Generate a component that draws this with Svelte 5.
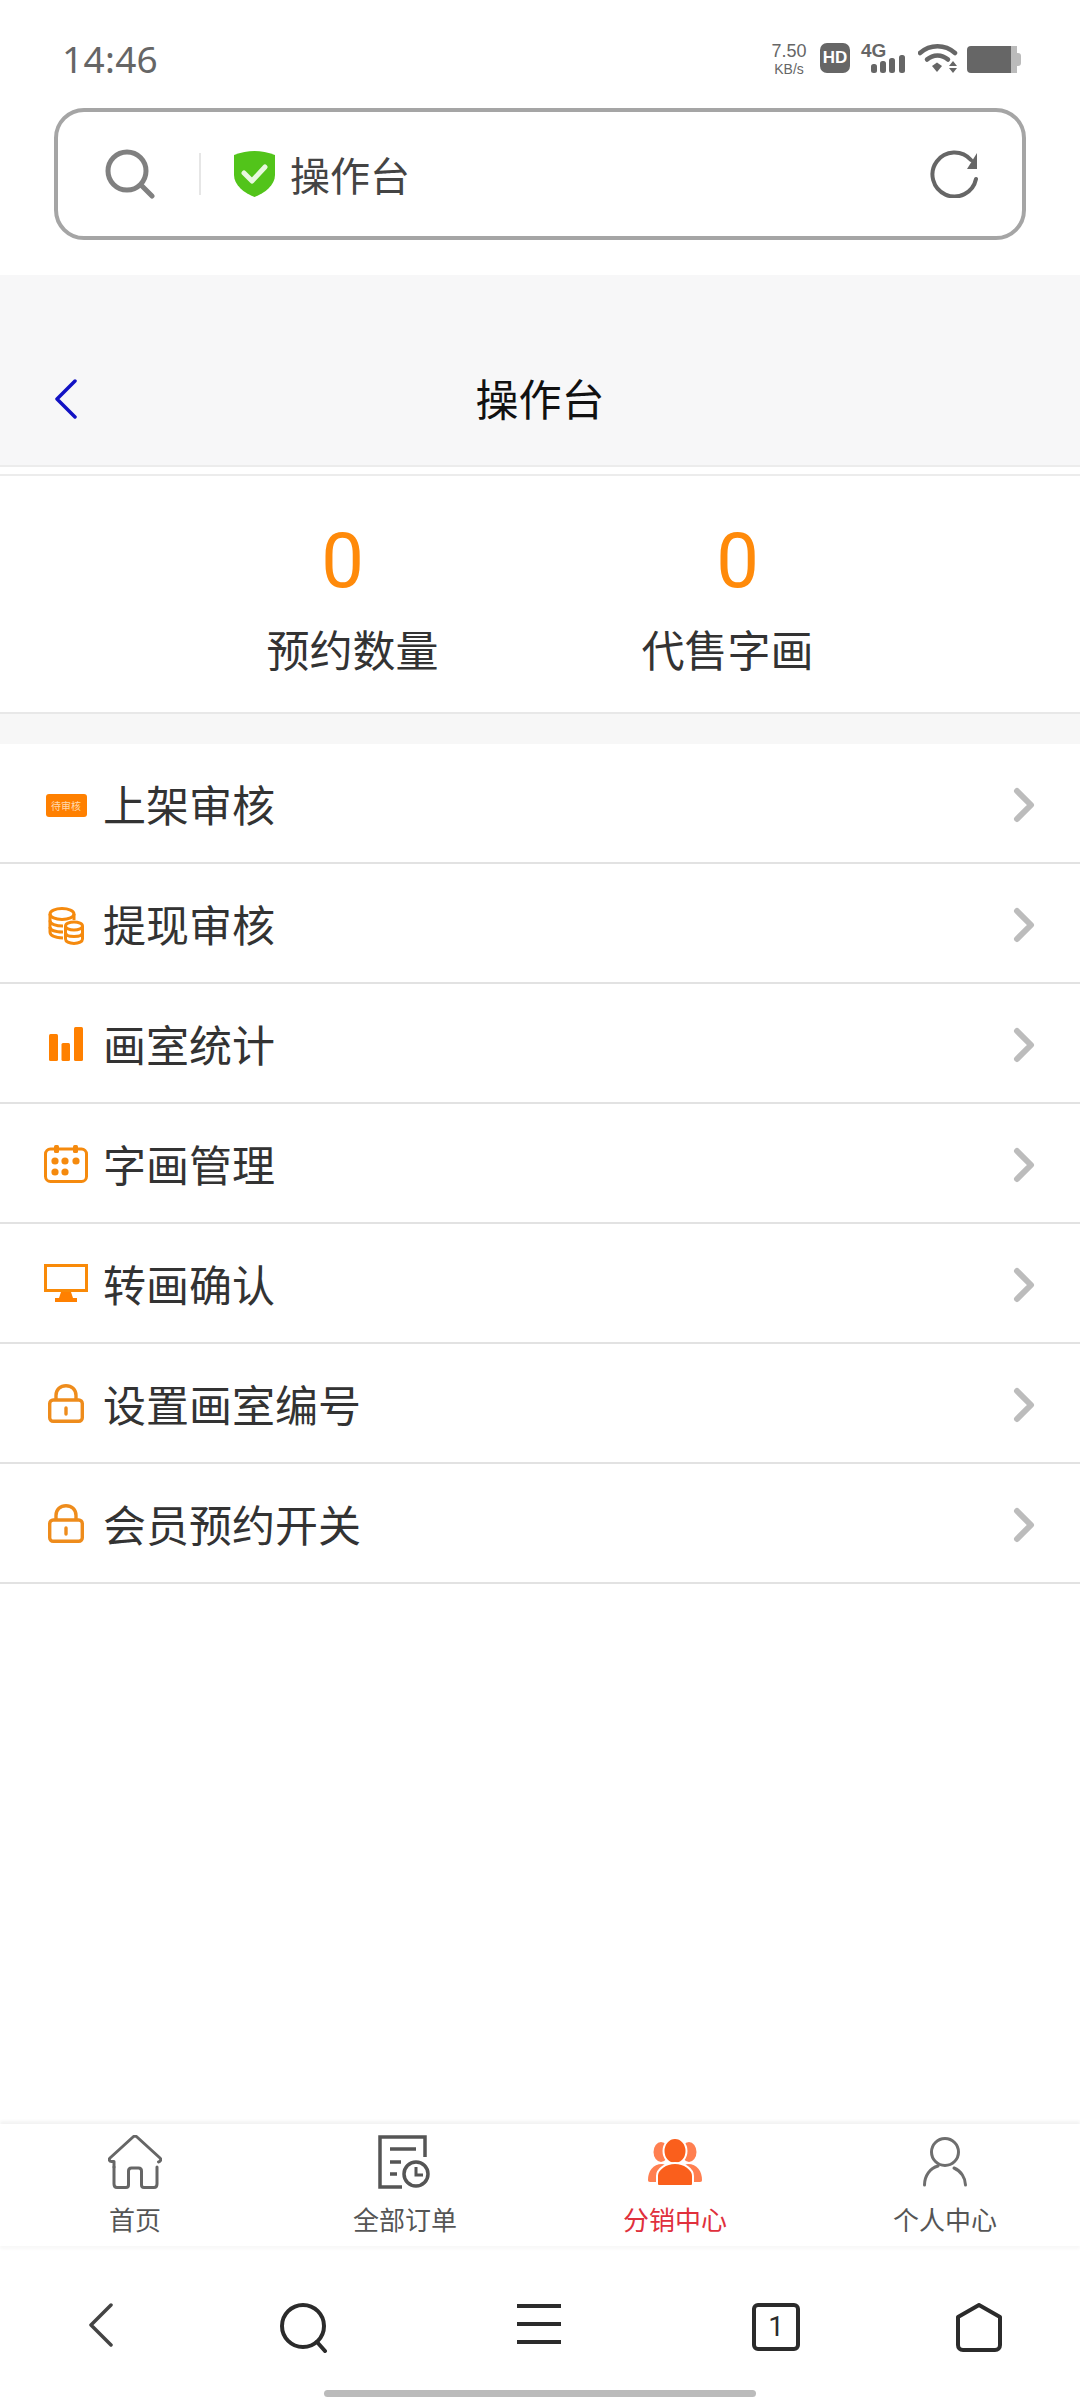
<script>
	const stats = [
		{ value: 0, label: '预约数量', side: 'left' },
		{ value: 0, label: '代售字画', side: 'right' }
	];

	const rows = [
		{ icon: 'badge', label: '上架审核' },
		{ icon: 'coins', label: '提现审核' },
		{ icon: 'bars', label: '画室统计' },
		{ icon: 'calendar', label: '字画管理' },
		{ icon: 'monitor', label: '转画确认' },
		{ icon: 'lock', label: '设置画室编号' },
		{ icon: 'lock', label: '会员预约开关' }
	];

	const tabs = [
		{ icon: 'home', label: '首页' },
		{ icon: 'orders', label: '全部订单' },
		{ icon: 'group', label: '分销中心', active: true },
		{ icon: 'person', label: '个人中心' }
	];
</script>

<div class="page">
	<!-- STATUS BAR -->
	<div class="status">
		<span class="time">14:46</span>
		<div class="status-icons">
			<div class="speed"><span>7.50</span><span class="unit">KB/s</span></div>
			<span class="hd">HD</span>
			<div class="signal">
				<span class="four-g">4G</span>
				<svg width="45" height="18" viewBox="0 0 45 18">
					<rect x="10" y="9" width="6" height="9" rx="2.5" fill="#666" />
					<rect x="19" y="6" width="6" height="12" rx="2.5" fill="#666" />
					<rect x="28" y="3" width="6" height="15" rx="2.5" fill="#666" />
					<rect x="38" y="0" width="6" height="18" rx="2.5" fill="#666" />
				</svg>
			</div>
			<svg class="wifi" width="40" height="30" viewBox="0 0 40 30">
				<path d="M2 10C12 1 27 1 37 10" fill="none" stroke="#666" stroke-width="4.5" stroke-linecap="round" />
				<path d="M9 16.500C15 11 24 11 30 16.500" fill="none" stroke="#666" stroke-width="4.500" stroke-linecap="round" />
				<path d="M14 23L19 19.500L24 23L19 29Z" fill="#666" />
				<path d="M31 23L35 18L39 23ZM31 25H39L35 30Z" fill="#666" />
			</svg>
			<div class="battery"><div class="battery-fill"></div><div class="battery-cap"></div></div>
		</div>
	</div>

	<!-- ADDRESS BAR -->
	<div class="address-wrap">
		<div class="address">
			<svg class="addr-search" width="50" height="50" viewBox="0 0 50 50">
				<circle cx="22" cy="22" r="19" fill="none" stroke="#808080" stroke-width="5" />
				<path d="M36 36L47 47" stroke="#808080" stroke-width="5" stroke-linecap="round" />
			</svg>
			<div class="addr-divider"></div>
			<svg class="shield" width="41" height="46" viewBox="0 0 41 46">
				<path d="M20.500 0C27 0 34 1.500 41 4V24C41 34 31 42 20.500 46C10 42 0 34 0 24V4C7 1.500 14 0 20.500 0Z" fill="#52c41a" />
				<path d="M10 22L18 30L31 16" fill="none" stroke="#e8f8df" stroke-width="5" stroke-linecap="round" stroke-linejoin="round" />
			</svg>
			<span class="addr-text">操作台</span>
			<svg class="refresh" width="48" height="48" viewBox="0 0 48 48">
				<path d="M46 29A22 22 0 1 1 41 10" fill="none" stroke="#666" stroke-width="4" stroke-linecap="round" />
				<path d="M47 3V19H37Z" fill="#666" />
			</svg>
		</div>
	</div>

	<!-- PAGE HEADER -->
	<header class="header">
		<svg class="back" width="24" height="40" viewBox="0 0 24 40">
			<path d="M21 2L3 20L21 38" fill="none" stroke="#1212c4" stroke-width="3.500" stroke-linecap="round" stroke-linejoin="round" />
		</svg>
		<h1>操作台</h1>
	</header>

	<section class="stats">
		{#each stats as stat}
			<div class="stat">
				<span class="value {stat.side}">{stat.value}</span>
				<span class="stat-label">{stat.label}</span>
			</div>
		{/each}
	</section>
	<div class="band"></div>

	<ul class="list">
		{#each rows as row}
			<li class="row">
				<span class="row-icon ic-{row.icon}">
					{#if row.icon === 'badge'}
						<span class="badge">待审核</span>
					{:else if row.icon === 'coins'}
						<svg width="36" height="38" viewBox="0 0 36 38" fill="none" stroke="#f58a0e" stroke-width="3">
							<ellipse cx="14" cy="7" rx="12" ry="5.500" />
							<path d="M2 7V25C2 28 6 30.500 15 31" />
							<path d="M2 13.500C2 17 8 19 15 19" />
							<path d="M2 20C2 23 7 25 15 25" />
							<path d="M26 7V13" />
							<ellipse cx="26" cy="19" rx="8.500" ry="4" />
							<path d="M17.500 19V32C17.500 34.500 21 36.500 26 36.500C31 36.500 34.500 34.500 34.500 32V19" />
							<path d="M17.500 25.500C17.500 28 21 29.500 26 29.500C31 29.500 34.500 28 34.500 25.500" />
						</svg>
					{:else if row.icon === 'bars'}
						<svg width="34" height="34" viewBox="0 0 34 34" fill="#ff8000">
							<rect x="0" y="7" width="9" height="27" rx="1.500" />
							<rect x="12.500" y="16" width="8.500" height="18" rx="1.500" />
							<rect x="25" y="0" width="9" height="34" rx="1.500" />
						</svg>
					{:else if row.icon === 'calendar'}
						<svg width="44" height="38" viewBox="0 0 44 38">
							<rect x="1.500" y="4" width="41" height="32.500" rx="5" fill="none" stroke="#f58a0e" stroke-width="3" />
							<g fill="#f58a0e">
								<rect x="10" y="0" width="5" height="8" rx="1.500" />
								<rect x="29" y="0" width="5" height="8" rx="1.500" />
								<circle cx="11" cy="16" r="3.600" />
								<circle cx="21" cy="16" r="3.600" />
								<circle cx="32" cy="16" r="3.600" />
								<circle cx="11" cy="27" r="3.600" />
								<circle cx="21" cy="27" r="3.600" />
							</g>
						</svg>
					{:else if row.icon === 'monitor'}
						<svg width="44" height="38" viewBox="0 0 44 38">
							<rect x="1.500" y="1.500" width="41" height="25" fill="none" stroke="#f98a08" stroke-width="3" />
							<path d="M17 28H27L29 34H33V38H11V34H15Z" fill="#ff8000" />
						</svg>
					{:else}
						<svg width="36" height="39" viewBox="0 0 36 39" fill="none" stroke="#ee8c1c" stroke-width="3.400">
							<rect x="1.700" y="16" width="32.600" height="21.300" rx="3.500" />
							<path d="M8 16V11.500C8 5.500 12.500 1.700 18 1.700C23.500 1.700 28 5.500 28 11.500V16" />
							<path d="M18 24V30" stroke-linecap="round" />
						</svg>
					{/if}
				</span>
				<span class="row-label">{row.label}</span>
				<svg class="chevron" width="24" height="36" viewBox="0 0 24 36">
					<path d="M5 4L19 18L5 32" fill="none" stroke="#bcbcbc" stroke-width="6" stroke-linejoin="round" stroke-linecap="round" />
				</svg>
			</li>
		{/each}
	</ul>

	<!-- TAB BAR -->
	<nav class="tabs">
		{#each tabs as tab}
			<div class="tab" class:active={tab.active}>
				<span class="tab-icon">
					{#if tab.icon === 'home'}
						<svg width="54" height="54" viewBox="0 0 54 54" fill="none" stroke="#666" stroke-width="3" stroke-linecap="round" stroke-linejoin="round">
							<path d="M6 32V26.500H3.500C1.500 26.500 0.500 24.500 2 23L25 2C26 1 28 1 29 2L52 23C53.500 24.500 52.500 26.500 50.500 27" />
							<path d="M49 32V49C49 51 48 52.500 46 52.500H36C34.500 52.500 33.500 51.500 33.500 50V36C33.500 34 32.500 33 30.500 33H23.500C21.500 33 20.500 34 20.500 36V50C20.500 51.500 19.500 52.500 18 52.500H9C7 52.500 6 51 6 49V32" />
						</svg>
					{:else if tab.icon === 'orders'}
						<svg width="54" height="54" viewBox="0 0 54 54" fill="none" stroke="#555" stroke-width="3.500">
							<path d="M24 52H2V2H47V22" />
							<path d="M12 14H38M12 27H23M12 39H19" />
							<circle cx="38" cy="39" r="12" />
							<path d="M38 32V40H45" stroke-width="3" />
						</svg>
					{:else if tab.icon === 'group'}
						<svg width="54" height="48" viewBox="0 0 54 48">
							<ellipse cx="13" cy="14" rx="7.500" ry="10" fill="#ff7f50" />
							<ellipse cx="41" cy="14" rx="7.500" ry="10" fill="#ff7f50" />
							<path d="M0 42C0 33 5 26 14 26C18 26 20 30 20 34V44H2C0.500 44 0 43 0 42Z" fill="#ff7f50" />
							<path d="M54 42C54 33 49 26 40 26C36 26 34 30 34 34V44H52C53.500 44 54 43 54 42Z" fill="#ff7f50" />
							<ellipse cx="27" cy="13" rx="11.500" ry="13" fill="#fa5f1c" stroke="#fff" stroke-width="2" />
							<path d="M9 46V38C9 31 18 25 27 25C36 25 45 31 45 38V46C45 47 44 48 43 48H11C10 48 9 47 9 46Z" fill="#fa5f1c" stroke="#fff" stroke-width="2" />
						</svg>
					{:else}
						<svg width="44" height="50" viewBox="0 0 44 50" fill="none" stroke="#6e6e6e" stroke-width="3" stroke-linecap="round">
							<circle cx="22" cy="15" r="13.500" />
							<path d="M1.500 48C1.500 39 7 31 15 29" />
							<path d="M31 31C38 34 42.500 41 42.500 48" />
						</svg>
					{/if}
				</span>
				<span class="tab-label">{tab.label}</span>
			</div>
		{/each}
	</nav>

	<!-- BROWSER TOOLBAR -->
	<div class="toolbar">
		<svg width="24" height="44" viewBox="0 0 24 44">
			<path d="M22 2L2 22L22 42" fill="none" stroke="#444" stroke-width="3.500" stroke-linecap="round" stroke-linejoin="round" />
		</svg>
		<svg width="48" height="50" viewBox="0 0 48 50">
			<circle cx="23" cy="23" r="21" fill="none" stroke="#2b2b2b" stroke-width="4" />
			<path d="M37 39L45 48" stroke="#2b2b2b" stroke-width="4" stroke-linecap="round" />
		</svg>
		<svg width="44" height="42" viewBox="0 0 44 42" stroke="#2b2b2b" stroke-width="4">
			<path d="M0 3H44M0 21H44M0 39H44" />
		</svg>
		<span class="tab-count">1</span>
		<svg width="46" height="49" viewBox="0 0 46 49">
			<path d="M23 2L44 14V42C44 45 42 47 39 47H7C4 47 2 45 2 42V14Z" fill="none" stroke="#2b2b2b" stroke-width="4" stroke-linejoin="round" />
		</svg>
	</div>
	<div class="indicator-wrap"><div class="indicator"></div></div>
</div>

<style>
	:global(body) {
		background: #fff;
	}

	.page {
		width: 1080px;
		height: 2400px;
		display: flex;
		flex-direction: column;
		background: #fff;
		font-family: 'Noto Sans CJK SC', 'Noto Sans', sans-serif;
		color: #333;
		overflow: hidden;
	}

	/* STATUS BAR */
	.status {
		height: 108px;
		box-sizing: border-box;
		padding: 41px 59px 0 62px;
		display: flex;
		justify-content: space-between;
		align-items: flex-start;
		flex-shrink: 0;
	}

	.time {
		font-family: 'Noto Sans', sans-serif;
		font-size: 37px;
		line-height: 36px;
		color: #666;
		letter-spacing: 0.3px;
	}

	.status-icons {
		display: flex;
		align-items: flex-start;
		margin-top: 2px;
	}

	.speed {
		width: 40px;
		display: flex;
		flex-direction: column;
		align-items: center;
		font-family: 'Liberation Sans', sans-serif;
		font-size: 18px;
		line-height: 20px;
		color: #666;
		margin: -2px 11px 0 -2px;
	}

	.unit {
		font-size: 14px;
		line-height: 17px;
	}

	.hd {
		width: 30px;
		height: 30px;
		border-radius: 7px;
		background: #666;
		color: #fff;
		font-family: 'Liberation Sans', sans-serif;
		font-weight: 700;
		font-size: 17px;
		line-height: 30px;
		text-align: center;
		margin-right: 11px;
	}

	.signal {
		width: 45px;
		height: 30px;
		position: relative;
		margin-right: 12px;
	}

	.signal svg {
		position: absolute;
		left: 0;
		bottom: 0;
	}

	.four-g {
		position: absolute;
		left: 0;
		top: -2px;
		font-family: 'Liberation Sans', sans-serif;
		font-weight: 700;
		font-size: 19px;
		line-height: 20px;
		color: #666;
	}

	.wifi {
		margin-right: 9px;
	}

	.battery {
		display: flex;
		align-items: center;
		margin-top: 3px;
	}

	.battery-fill {
		width: 44px;
		height: 27px;
		border-radius: 4px 0 0 4px;
		background: #666;
		border-right: 6px solid #bbb;
	}

	.battery-cap {
		width: 4px;
		height: 13px;
		background: #bbb;
		border-radius: 0 3px 3px 0;
	}

	/* ADDRESS BAR */
	.address-wrap {
		height: 167px;
		box-sizing: border-box;
		padding: 0 54px 0 54px;
		flex-shrink: 0;
	}

	.address {
		height: 132px;
		box-sizing: border-box;
		border: 4px solid #a5a5a5;
		border-radius: 30px;
		display: flex;
		align-items: center;
		padding: 0 44px 0 47px;
	}

	.addr-divider {
		width: 2px;
		height: 42px;
		background: #e6e6e6;
		margin: 0 33px 0 44px;
	}

	.addr-text {
		margin-left: 15px;
		font-size: 40px;
		color: #444;
		flex: 1;
	}

	/* PAGE HEADER */
	.header {
		height: 192px;
		box-sizing: border-box;
		padding: 58px 0 0 54px;
		background: #f7f7f8;
		border-bottom: 2px solid #ececec;
		display: flex;
		align-items: center;
		position: relative;
		flex-shrink: 0;
	}

	.header h1 {
		position: absolute;
		left: 0;
		right: 0;
		margin: 0;
		padding-bottom: 4px;
		text-align: center;
		font-size: 43px;
		font-weight: 400;
		color: #111;
	}

	/* STATS */
	.stats {
		margin-top: 7px;
		height: 240px;
		box-sizing: border-box;
		border-top: 2px solid #ececec;
		border-bottom: 2px solid #e8e8e8;
		display: flex;
		justify-content: center;
		flex-shrink: 0;
	}

	.stat {
		width: 375px;
		display: flex;
		flex-direction: column;
		align-items: center;
	}

	.value {
		font-family: Roboto, sans-serif;
		font-size: 76px;
		line-height: 80px;
		margin-top: 45px;
		color: #ff8a0a;
	}

	.value.left {
		padding-right: 20px;
	}

	.value.right {
		padding-left: 20px;
	}

	.stat-label {
		margin-top: 17px;
		font-size: 43px;
		line-height: 60px;
		color: #333;
	}

	.band {
		height: 30px;
		background: #f7f7f7;
		flex-shrink: 0;
	}

	/* LIST */
	.list {
		list-style: none;
		margin: 0;
		padding: 0;
		flex: 1;
	}

	.row {
		height: 120px;
		box-sizing: border-box;
		border-bottom: 2px solid #e2e2e2;
		display: flex;
		align-items: center;
		padding: 0 44px 0 44px;
	}

	.row-icon {
		width: 44px;
		display: flex;
		justify-content: center;
		margin-right: 15px;
	}

	.ic-badge,
	.ic-coins {
		margin-top: 5px;
	}

	.ic-bars,
	.ic-calendar {
		margin-top: 2px;
	}

	.chevron {
		margin-top: 3px;
	}

	.badge {
		width: 41px;
		height: 23px;
		border-radius: 3px;
		background: #ff8000;
		color: #ffd9ad;
		font-size: 10px;
		line-height: 23px;
		text-align: center;
		white-space: nowrap;
		overflow: hidden;
	}

	.row-label {
		flex: 1;
		font-size: 43px;
		color: #333;
	}

	/* TAB BAR */
	.tabs {
		height: 122px;
		display: flex;
		background: #fff;
		box-shadow: 0 -3px 3px rgba(0, 0, 0, 0.05), 0 3px 3px rgba(0, 0, 0, 0.03);
		flex-shrink: 0;
		position: relative;
	}

	.tab {
		flex: 1;
		display: flex;
		flex-direction: column;
		align-items: center;
		padding-top: 11px;
		color: #555;
	}

	.tab-icon {
		height: 54px;
		display: flex;
		align-items: center;
	}

	.tab.active {
		color: #e0303c;
	}

	.tab-label {
		margin-top: 11px;
		font-size: 26px;
		line-height: 38px;
	}

	/* BROWSER TOOLBAR */
	.toolbar {
		height: 144px;
		box-sizing: border-box;
		padding-top: 57px;
		display: grid;
		grid-template-columns: 202px 204px 266px 208px 198px;
		justify-items: center;
		align-items: start;
		flex-shrink: 0;
	}

	.tab-count {
		width: 48px;
		height: 48px;
		box-sizing: border-box;
		border: 4px solid #2b2b2b;
		border-radius: 6px;
		font-family: Roboto, sans-serif;
		font-size: 28px;
		line-height: 40px;
		text-align: center;
		color: #2b2b2b;
	}

	.indicator-wrap {
		height: 10px;
		flex-shrink: 0;
		display: flex;
		justify-content: center;
	}

	.indicator {
		width: 432px;
		height: 7px;
		border-radius: 4px;
		background: #bbb;
	}
</style>
